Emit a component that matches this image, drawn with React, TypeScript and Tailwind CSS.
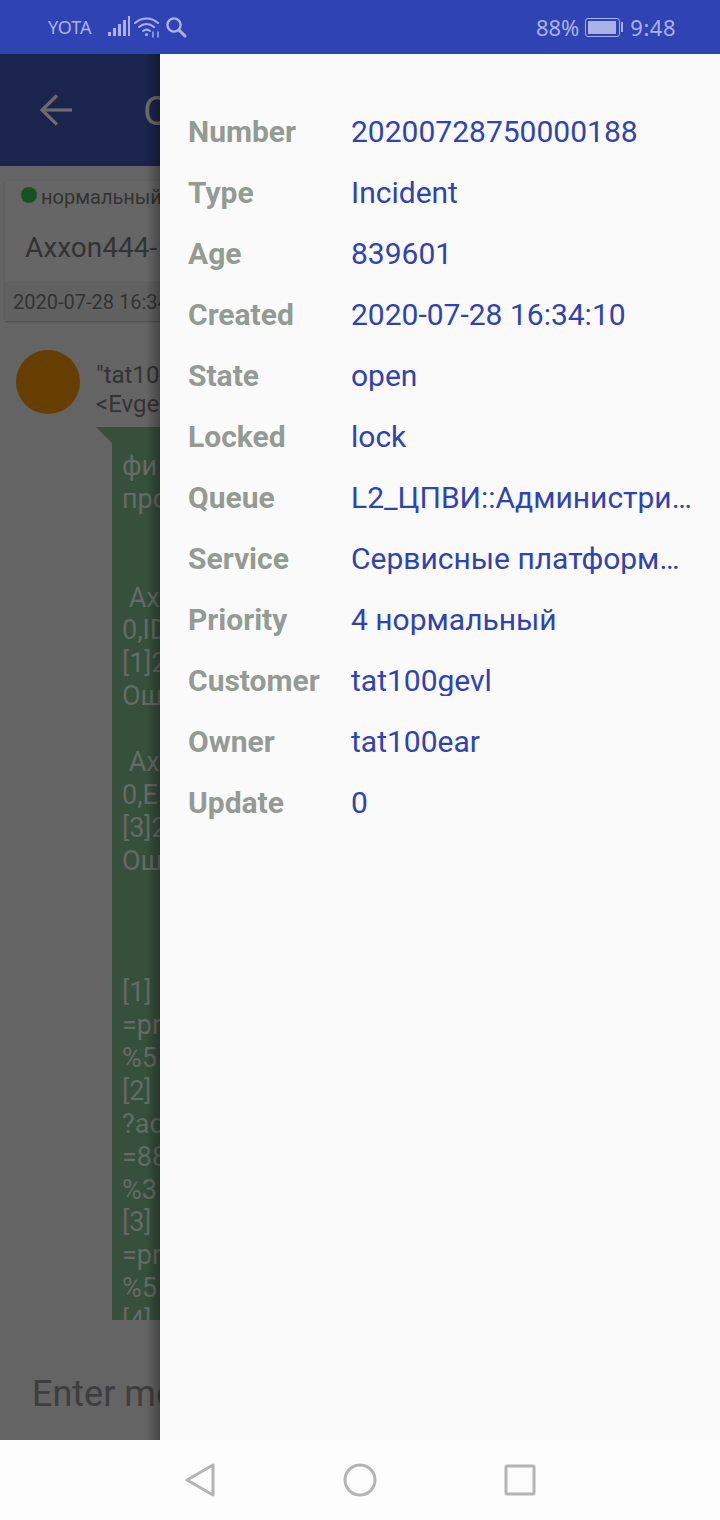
import React from 'react';

const details: [string, string][] = [
  ['Number', '20200728750000188'],
  ['Type', 'Incident'],
  ['Age', '839601'],
  ['Created', '2020-07-28 16:34:10'],
  ['State', 'open'],
  ['Locked', 'lock'],
  ['Queue', 'L2_ЦПВИ::Администрирование'],
  ['Service', 'Сервисные платформы и системы'],
  ['Priority', '4 нормальный'],
  ['Customer', 'tat100gevl'],
  ['Owner', 'tat100ear'],
  ['Update', '0'],
];

// what shows of the message before the drawer cuts it off
const bubbleLines = [
  'фи', 'про', '', '', ' Ах', '0,ID', '[1]2', 'Ош', '', ' Ах', '0,Е', '[3]2', 'Ош', '', '', '',
  '[1]', '=pr', '%5', '[2]', '?ac', '=88', '%3', '[3]', '=pr', '%5', '[4]',
];

const StatusBar = () => (
  <div className="h-[54px] shrink-0 bg-[#3043b5] flex items-center text-[#a9b3e8] font-[Noto_Sans,sans-serif]">
    <span className="ml-[48px] text-[18px] leading-none">YOTA</span>
    <svg className="ml-[16px]" width="22" height="22" viewBox="0 0 22 22" fill="currentColor">
      <rect x="0" y="16" width="3" height="4" />
      <rect x="5" y="12" width="3" height="8" />
      <rect x="10" y="8" width="3" height="12" />
      <rect x="15" y="4" width="3" height="16" />
      <rect x="20" y="0" width="2" height="20" />
    </svg>
    <svg className="ml-[4px]" width="26" height="22" viewBox="0 0 26 22" fill="none" stroke="currentColor" strokeWidth="2" strokeLinecap="round">
      <path d="M1 7C7.5 1 17.5 1 24 7" />
      <path d="M5 11C9.5 7 15.5 7 20 11" />
      <path d="M9 15C11.5 13 13.5 13 16 15" />
      <circle cx="12.5" cy="18.5" r="1.6" fill="currentColor" stroke="none" />
      <path d="M19 16v5M24 16v5" strokeWidth="1.4" />
    </svg>
    <svg className="ml-[5px]" width="22" height="22" viewBox="0 0 22 22" fill="none" stroke="currentColor" strokeWidth="2.4" strokeLinecap="round">
      <circle cx="9" cy="9" r="6.6" />
      <path d="M14 14l6 6" strokeWidth="3" />
    </svg>
    <span className="ml-auto text-[22px] leading-none">88%</span>
    <div className="ml-[6px] flex items-center">
      <div className="w-[35px] h-[19px] rounded-[3px] border border-[#a9b3e8] p-[2px]">
        <div className="h-full w-[28px] bg-[#a9b3e8]" />
      </div>
      <div className="ml-[1px] w-[2px] h-[10px] bg-[#a9b3e8]" />
    </div>
    <span className="ml-[7px] mr-[44px] text-[22px] leading-none tracking-[0.5px]">9:48</span>
  </div>
);

const BackgroundPage = () => (
  <div className="relative w-[160px] shrink-0 overflow-hidden bg-[#646464] font-[Roboto,sans-serif]">
    <div className="w-[720px]">
      <div className="h-[112px] bg-[#1b244c] flex items-center">
        <svg className="ml-[38px]" width="36" height="36" viewBox="0 0 36 36" fill="none" stroke="#6c6c6c" strokeWidth="3.2">
          <path d="M34 18H5" />
          <path d="M19 3.5L4 18l15 14.5" />
        </svg>
        <span className="ml-[69px] pt-[4px] text-[40px] leading-none text-[#6c6c6c]">О</span>
      </div>

      <div className="mt-[15px] ml-[5px] h-[140px] w-[500px] rounded-[2px] bg-[#666666] shadow-[0_1px_2px_rgba(0,0,0,0.25)] flex flex-col text-[#333333]">
        <div className="h-[31px] pl-[16px] flex items-center">
          <span className="w-[16px] h-[16px] mb-[3px] rounded-full bg-[#185223]" />
          <span className="ml-[4px] text-[20px] leading-none">нормальный</span>
        </div>
        <div className="h-[69px] pl-[20px] pt-[2px] flex items-center text-[28px] leading-none">Axxon444-</div>
        <div className="flex-1 pl-[8px] pt-[1px] bg-[#616161] flex items-center text-[20px] leading-none whitespace-nowrap">2020-07-28 16:34:10</div>
      </div>

      <div className="mt-[29px] ml-[16px] flex items-start">
        <div className="w-[64px] h-[64px] rounded-full bg-[#663f00] shrink-0" />
        <div className="ml-[16px] pt-[11px] text-[24px] leading-[29px] text-[#333333]">
          <div>"tat100</div>
          <div>&lt;Evgeny</div>
        </div>
      </div>

      <div className="mt-[8px] ml-[96px] flex items-start">
        <svg className="shrink-0" width="16" height="16" viewBox="0 0 16 16">
          <path d="M0 0H16V16Z" fill="#36503c" />
        </svg>
        <div className="w-[300px] h-[893px] overflow-hidden bg-[#36503c] pt-[23px] pl-[10px] text-[27px] leading-[32.9px] text-[#646b66]">
          {bubbleLines.map((line, i) => (
            <div key={i} className="h-[32.9px] whitespace-pre">{line}</div>
          ))}
        </div>
      </div>

      <div className="mt-[49px] ml-[32px] text-[36px] leading-[50px] text-[#3e3e3e] whitespace-nowrap">Enter message</div>
    </div>
    {/* drawer shadow falling on the page underneath */}
    <div className="absolute inset-y-0 right-0 w-[14px] bg-gradient-to-r from-transparent to-black/30" />
  </div>
);

const Drawer = () => (
  <div className="flex-1 min-w-0 bg-[#fafafa] pt-[47px] pl-[28px] pr-[27px] font-[Roboto,sans-serif] text-[30px]">
    {details.map(([label, value]) => (
      <div key={label} className="h-[61px] flex items-center leading-none">
        <span className="w-[163px] shrink-0 font-bold text-[#949a94]">{label}</span>
        <span className="min-w-0 truncate text-[#3043ae]">{value}</span>
      </div>
    ))}
  </div>
);

const NavBar = () => (
  <div className="h-[80px] shrink-0 bg-[#fdfdfd] flex items-center">
    <svg className="ml-[185px]" width="30" height="34" viewBox="0 0 30 34" fill="none" stroke="#b4b4b4" strokeWidth="3" strokeLinejoin="round">
      <path d="M28 2V32L2 17Z" />
    </svg>
    <svg className="ml-[128px]" width="34" height="34" viewBox="0 0 34 34" fill="none" stroke="#b4b4b4" strokeWidth="3">
      <circle cx="17" cy="17" r="15" />
    </svg>
    <svg className="ml-[127px]" width="32" height="32" viewBox="0 0 32 32" fill="none" stroke="#b4b4b4" strokeWidth="3" strokeLinejoin="round">
      <rect x="2" y="2" width="28" height="28" rx="1" />
    </svg>
  </div>
);

export default function App() {
  return (
    <div className="w-[720px] h-[1520px] flex flex-col overflow-hidden">
      <StatusBar />
      <div className="flex-1 min-h-0 flex">
        <BackgroundPage />
        <Drawer />
      </div>
      <NavBar />
    </div>
  );
}
